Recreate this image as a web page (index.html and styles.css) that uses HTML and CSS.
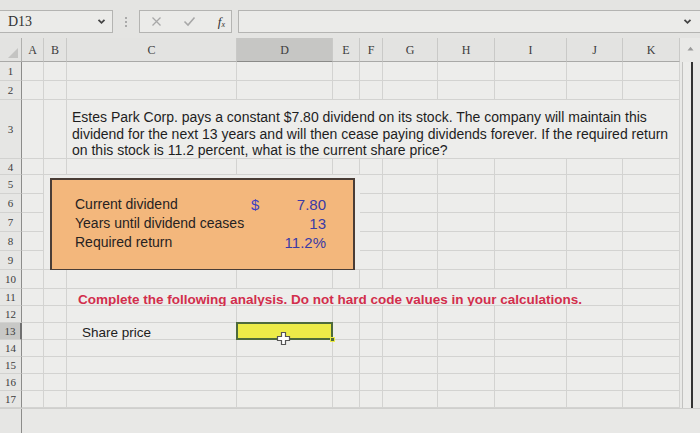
FILE: index.html
```html
<!DOCTYPE html>
<html>
<head>
<meta charset="utf-8">
<link rel="stylesheet" href="styles.css">
</head>
<body>
<div class="app">
  <div class="toolbar">
    <div class="namebox">
      <span class="nb-text">D13</span>
      <svg class="chev" width="9" height="7" viewBox="0 0 9 7"><path d="M1.5 1.8 L4.5 4.8 L7.5 1.8" fill="none" stroke="#444" stroke-width="1.8"/></svg>
    </div>
    <div class="dots"><i></i><i></i><i></i></div>
    <div class="fnbox">
      <svg width="11" height="11" viewBox="0 0 11 11"><path d="M1.5 1.5 L9.5 9.5 M9.5 1.5 L1.5 9.5" stroke="#a8a8a8" stroke-width="1.3" fill="none"/></svg>
      <svg width="13" height="11" viewBox="0 0 13 11"><path d="M1.5 5.5 L5 9 L11.5 1.5" stroke="#a8a8a8" stroke-width="1.6" fill="none"/></svg>
      <span class="fx">f<sub>x</sub></span>
    </div>
    <div class="formula">
      <svg class="chev" width="9" height="7" viewBox="0 0 9 7"><path d="M1.5 1.8 L4.5 4.8 L7.5 1.8" fill="none" stroke="#444" stroke-width="1.8"/></svg>
    </div>
  </div>

  <div class="sheetwrap">
    <div class="sheet">
      <!-- header -->
      <div class="ch corner"><span class="tri"></span></div>
      <div class="ch">A</div><div class="ch">B</div><div class="ch">C</div><div class="ch sel">D</div><div class="ch">E</div><div class="ch">F</div><div class="ch">G</div><div class="ch">H</div><div class="ch">I</div><div class="ch">J</div><div class="ch">K</div>

      <!-- row 1 -->
      <div class="rh">1</div><div class="c"></div><div class="c"></div><div class="c"></div><div class="c"></div><div class="c"></div><div class="c"></div><div class="c"></div><div class="c"></div><div class="c"></div><div class="c"></div><div class="c"></div>
      <!-- row 2 -->
      <div class="rh">2</div><div class="c"></div><div class="c"></div><div class="c"></div><div class="c"></div><div class="c"></div><div class="c"></div><div class="c"></div><div class="c"></div><div class="c"></div><div class="c"></div><div class="c"></div>
      <!-- row 3 -->
      <div class="rh">3</div><div class="c"></div><div class="c"></div>
      <div class="c merged problem">Estes Park Corp. pays a constant $7.80 dividend on its stock. The company will maintain this dividend for the next 13 years and will then cease paying dividends forever. If the required return on this stock is 11.2 percent, what is the current share price?</div>
      <!-- row 4 -->
      <div class="rh">4</div><div class="c"></div><div class="c"></div><div class="c"></div><div class="c"></div><div class="c"></div><div class="c"></div><div class="c"></div><div class="c"></div><div class="c"></div><div class="c"></div><div class="c"></div>
      <!-- rows 5-9 (B..E covered by input block) -->
      <div class="rh">5</div><div class="c"></div><div class="c"></div><div class="c"></div><div class="c"></div><div class="c"></div><div class="c"></div><div class="c"></div>
      <div class="rh">6</div><div class="c"></div><div class="c"></div><div class="c"></div><div class="c"></div><div class="c"></div><div class="c"></div><div class="c"></div>
      <div class="rh">7</div><div class="c"></div><div class="c"></div><div class="c"></div><div class="c"></div><div class="c"></div><div class="c"></div><div class="c"></div>
      <div class="rh">8</div><div class="c"></div><div class="c"></div><div class="c"></div><div class="c"></div><div class="c"></div><div class="c"></div><div class="c"></div>
      <div class="rh">9</div><div class="c"></div><div class="c"></div><div class="c"></div><div class="c"></div><div class="c"></div><div class="c"></div><div class="c"></div>

      <div class="inputs">
        <div class="obox">
          <div class="lbl">Current dividend</div><div class="val"><span class="dol">$</span><span>7.80</span></div>
          <div class="lbl">Years until dividend ceases</div><div class="val"><span></span><span>13</span></div>
          <div class="lbl">Required return</div><div class="val"><span></span><span>11.2%</span></div>
        </div>
      </div>

      <!-- row 10 -->
      <div class="rh">10</div><div class="c"></div><div class="c"></div><div class="c"></div><div class="c"></div><div class="c"></div><div class="c"></div><div class="c"></div><div class="c"></div><div class="c"></div><div class="c"></div><div class="c"></div>
      <!-- row 11 -->
      <div class="rh">11</div><div class="c"></div><div class="c"></div>
      <div class="c merged8 instr">Complete the following analysis. Do not hard code values in your calculations.</div><div class="c"></div>
      <!-- row 12 -->
      <div class="rh">12</div><div class="c"></div><div class="c"></div><div class="c"></div><div class="c"></div><div class="c"></div><div class="c"></div><div class="c"></div><div class="c"></div><div class="c"></div><div class="c"></div><div class="c"></div>
      <!-- row 13 -->
      <div class="rh sel">13</div><div class="c"></div><div class="c"></div><div class="c label13">Share price</div>
      <div class="c active"><span class="handle"></span>
        <svg class="cursor" width="15" height="15" viewBox="0 0 15 15"><path d="M5.5 1.5 H9.5 V5.5 H13.5 V9.5 H9.5 V13.5 H5.5 V9.5 H1.5 V5.5 H5.5 Z" fill="#fff" stroke="#555" stroke-width="1.2"/></svg>
      </div>
      <div class="c"></div><div class="c"></div><div class="c"></div><div class="c"></div><div class="c"></div><div class="c"></div><div class="c"></div>
      <!-- rows 14-17 -->
      <div class="rh">14</div><div class="c"></div><div class="c"></div><div class="c"></div><div class="c"></div><div class="c"></div><div class="c"></div><div class="c"></div><div class="c"></div><div class="c"></div><div class="c"></div><div class="c"></div>
      <div class="rh">15</div><div class="c"></div><div class="c"></div><div class="c"></div><div class="c"></div><div class="c"></div><div class="c"></div><div class="c"></div><div class="c"></div><div class="c"></div><div class="c"></div><div class="c"></div>
      <div class="rh">16</div><div class="c"></div><div class="c"></div><div class="c"></div><div class="c"></div><div class="c"></div><div class="c"></div><div class="c"></div><div class="c"></div><div class="c"></div><div class="c"></div><div class="c"></div>
      <div class="rh">17</div><div class="c"></div><div class="c"></div><div class="c"></div><div class="c"></div><div class="c"></div><div class="c"></div><div class="c"></div><div class="c"></div><div class="c"></div><div class="c"></div><div class="c"></div>
    </div>
    <div class="vscroll">
      <div class="vs-btn"><svg width="7" height="5" viewBox="0 0 7 5"><path d="M0.5 4.5 L3.5 0.8 L6.5 4.5 Z" fill="#9a9a9a"/></svg></div>
      <div class="vs-track"></div>
    </div>
  </div>
  <div class="below"><div class="below-rh"></div></div>
</div>
</body>
</html>
```

FILE: styles.css
```css
* { box-sizing: border-box; }
html, body { margin: 0; padding: 0; }
body {
  width: 700px;
  height: 433px;
  overflow: hidden;
  background: #e6e6e4;
  font-family: "Liberation Sans", Arial, sans-serif;
}
.app { width: 700px; height: 433px; display: flex; flex-direction: column; }

/* toolbar */
.toolbar {
  height: 38px;
  padding-top: 10px;
  display: flex;
  align-items: flex-start;
  background: #e4e4e2;
}
.namebox {
  width: 114px;
  height: 23px;
  margin-left: -1px;
  border: 1px solid #b4b4b2;
  background: #ebebe9;
  display: flex;
  align-items: center;
  justify-content: space-between;
  padding: 0 6px 0 8px;
}
.nb-text {
  font-family: "Liberation Serif", "Times New Roman", serif;
  font-size: 14px;
  color: #333;
}
.dots {
  width: 26px;
  height: 23px;
  display: flex;
  flex-direction: column;
  align-items: center;
  justify-content: center;
  gap: 2px;
}
.dots i { width: 2px; height: 2px; background: #aaa; display: block; }
.fnbox {
  width: 93px;
  height: 23px;
  border: 1px solid #b4b4b2;
  background: #ebebe9;
  display: flex;
  align-items: center;
  justify-content: space-between;
  padding: 0 6px 0 11px;
}
.fx {
  font-family: "Liberation Serif", "Times New Roman", serif;
  font-style: italic;
  font-size: 13px;
  color: #333;
  line-height: 1;
}
.fx sub { font-size: 8px; vertical-align: -1px; }
.formula {
  flex: 1;
  height: 23px;
  margin-left: 6px;
  margin-right: -1px;
  border: 1px solid #b4b4b2;
  background: #ebebe9;
  display: flex;
  align-items: center;
  justify-content: flex-end;
  padding-right: 8px;
}

/* sheet */
.sheetwrap { display: flex; }
.sheet {
  width: 680px;
  display: grid;
  grid-template-columns: 22px 22px 23px 170px 96px 27px 23px 55px 57px 72px 56px 57px;
  grid-template-rows: 24px 19px 19px 59px 16px repeat(6, 19px) repeat(7, 17px);
  background: #ececea;
}
.ch {
  background: #e3e3e1;
  border-right: 1px solid #c9c9c7;
  border-bottom: 1px solid #a9a9a7;
  font-family: "Liberation Serif", "Times New Roman", serif;
  font-size: 12px;
  color: #3c3c3c;
  display: flex;
  align-items: center;
  justify-content: center;
  padding-top: 2px;
}
.ch.sel { background: #c6c6c4; border-bottom: 1px solid #8a8a88; }
.corner { position: relative; border-right: 1px solid #b0b0ae; }
.tri {
  position: absolute;
  right: 3px;
  bottom: 3px;
  width: 0; height: 0;
  border-left: 10px solid transparent;
  border-bottom: 10px solid #c4c4c2;
}
.rh {
  background: #e6e6e4;
  border-right: 1px solid #8c8c8a;
  border-bottom: 1px solid #d2d2d0;
  font-family: "Liberation Serif", "Times New Roman", serif;
  font-size: 11px;
  color: #3c3c3c;
  display: flex;
  align-items: center;
  justify-content: center;
}
.rh.sel { background: #c8c8c6; border-right: 2px solid #707070; }
.c {
  border-right: 1px solid #d3d3d1;
  border-bottom: 1px solid #d3d3d1;
  background: #ededeb;
  font-size: 14px;
  color: #202020;
  min-width: 0;
}
.merged { grid-column: span 9; }
.merged8 { grid-column: span 8; }
.problem {
  padding: 9px 8px 0 5px;
  line-height: 16.5px;
  font-size: 14px;
  color: #1e1e1e;
}
.instr {
  font-weight: bold;
  font-size: 13.5px;
  color: #d22e4c;
  padding-left: 11px;
  padding-top: 2px;
  line-height: 17px;
  white-space: nowrap;
}
.label13 { padding-left: 15px; padding-top: 1px; line-height: 17px; font-size: 13.5px; }

/* input block B5:E9 */
.inputs {
  grid-column: 3 / 7;
  grid-row: 6 / 11;
  background: #ededeb;
  border-bottom: 1px solid #d3d3d1;
  padding: 3px 5px 0 6px;
}
.obox {
  height: 93px;
  background: #f3b77c;
  border: 2px solid #4a3d36;
  display: grid;
  grid-template-columns: 185px 96px;
  grid-template-rows: 19px 19px 19px;
  padding-top: 15px;
  align-content: start;
}
.lbl {
  padding-left: 23px;
  font-size: 14px;
  color: #262222;
  line-height: 19px;
  white-space: nowrap;
}
.val {
  display: flex;
  justify-content: space-between;
  padding: 0 7px 0 14px;
  font-size: 15px;
  color: #3a3aa6;
  line-height: 19px;
}
.dol { color: #3d3fc2; }

/* active cell */
.active {
  position: relative;
  background: #eceb48;
  border: 2px solid #4d6a3c;
  margin: -1px 0 0 -1px;
}
.handle {
  position: absolute;
  right: -4px;
  bottom: -4px;
  width: 5px;
  height: 5px;
  background: #4d6a3c;
  border: 1px solid #eceb48;
}
.cursor { position: absolute; left: 38px; top: 7px; }

/* vertical scroll */
.vscroll {
  width: 20px;
  display: flex;
  flex-direction: column;
  background: #e9e9e7;
}
.vs-btn {
  height: 24px;
  display: flex;
  align-items: flex-start;
  justify-content: center;
  padding-top: 6px;
}
.vs-btn svg { margin-top: 2px; }
.vs-track {
  flex: 1;
  border-left: 1px solid #c2c2c0;
  margin-left: 2px;
  background: linear-gradient(to right, #ececea 0, #ececea 8px, #333 8px, #333 10px, #e8e8e6 10px);
}

.below { flex: 1; display: flex; background: #e8e8e6; border-top: 1px solid #cfcfcd; }
.below-rh { width: 22px; border-right: 1px solid #8c8c8a; background: #e6e6e4; }
```
